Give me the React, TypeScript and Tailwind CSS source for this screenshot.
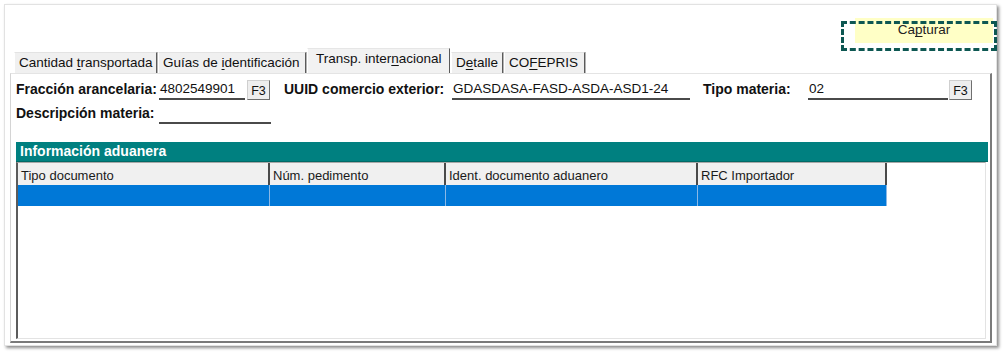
const TABS = [
  { key: "cant", pre: "Cantidad ", mn: "t", post: "ransportada", w: "w-[143px]" },
  { key: "guias", pre: "Guías de ", mn: "i", post: "dentificación", w: "w-[148px]" },
  { key: "transp", pre: "Transp. inter", mn: "n", post: "acional", w: "w-[143px]", active: true },
  { key: "det", pre: "D", mn: "e", post: "talle", w: "w-[52px]" },
  { key: "cof", pre: "CO", mn: "F", post: "EPRIS", w: "w-[81px]" }
];

const COLUMNS = [
  { label: "Tipo documento", w: "w-[252px]" },
  { label: "Núm. pedimento", w: "w-[176px]" },
  { label: "Ident. documento aduanero", w: "w-[252px]" },
  { label: "RFC Importador", w: "w-[189px]" }
];

function F3Button({ className = "" }: { className?: string }) {
  return (
    <button
      type="button"
      className={`flex h-[20px] w-[23px] items-center justify-center border border-[#cfcfcf] border-b-[#6f6f6f] border-r-[#6f6f6f] bg-[#eeeeee] pt-[2px] text-[12.5px] leading-none text-[#111] ${className}`}
    >
      F3
    </button>
  );
}

function Field({ value, w }: { value: string; w: string }) {
  return (
    <div className={`${w} flex h-[19px] items-end border-b-2 border-[#4a4a4a] pb-[1px] pl-[1px] text-[13.5px] leading-[16px] text-[#111]`}>
      {value}
    </div>
  );
}

function Label({ text, w, className = "" }: { text: string; w: string; className?: string }) {
  return (
    <div className={`${w} shrink-0 text-[14px] font-bold leading-[16px] text-[#111] ${className}`}>{text}</div>
  );
}

function TabText({ pre, mn, post }: { pre: string; mn: string; post: string }) {
  return (
    <span className="whitespace-pre">
      {pre}
      <span className="underline underline-offset-2">{mn}</span>
      {post}
    </span>
  );
}

export default function App() {
  return (
    <div className="h-[356px] w-[1008px] bg-white pl-[4px] pt-[4px] font-['Liberation_Sans',Arial,sans-serif]">
      <div className="flex h-[342px] w-[993px] flex-col border border-[#e2e2e2] bg-white shadow-[2px_2px_3px_rgba(0,0,0,0.45)]">
        {/* capture button */}
        <div className="flex h-[43px] justify-end pr-[3px] pt-[13px]">
          <div className="relative flex h-[25px] w-[138px] items-center justify-center bg-[#ffffc6] text-[13.5px] text-[#222]">
            <span>
              Ca<span className="underline underline-offset-2">p</span>turar
            </span>
            <div className="absolute left-[-14px] top-[3px] h-[30px] w-[156px] border-[3px] border-dashed border-[#0d5752]" />
          </div>
        </div>

        {/* tabs */}
        <div className="flex h-[25px] items-end gap-[1px] pl-[9px]">
          {TABS.map((t) =>
            t.active ? (
              <div
                key={t.key}
                className={`${t.w} flex h-[25px] items-center border-l border-t border-l-white border-t-[#e6e6e6] border-r border-r-[#5a5a5a] bg-[#f2f2f2] pb-[3px] pl-[8px] text-[13.5px] text-[#111]`}
              >
                <TabText pre={t.pre} mn={t.mn} post={t.post} />
              </div>
            ) : (
              <div
                key={t.key}
                className={`${t.w} flex h-[21px] items-center border-l border-t border-l-white border-t-[#e3e3e3] border-r border-r-[#5a5a5a] bg-[#f0f0f0] pl-[4px] text-[13.5px] text-[#111] shadow-[1px_0_0_#b4b4b4]`}
              >
                <TabText pre={t.pre} mn={t.mn} post={t.post} />
              </div>
            )
          )}
        </div>

        {/* panel */}
        <div className="ml-[5px] flex h-[270px] w-[982px] flex-col border-l border-t border-l-[#d4d4d4] border-t-[#e4e4e4] border-r-2 border-b-2 border-r-[#7a7a7a] border-b-[#7a7a7a] bg-white pl-[5px] pt-[6px]">
          <div className="flex h-[20px] items-center">
            <Label text="Fracción arancelaria:" w="w-[143px]" className="-mt-[3px]" />
            <Field value="4802549901" w="w-[86px]" />
            <F3Button className="ml-[2px]" />
            <Label text="UUID comercio exterior:" w="w-[168px]" className="-mt-[3px] ml-[14px]" />
            <Field value="GDASDASA-FASD-ASDA-ASD1-24" w="w-[238px]" />
            <Label text="Tipo materia:" w="w-[105px]" className="-mt-[3px] ml-[13px]" />
            <Field value="02" w="w-[140px]" />
            <F3Button className="ml-[1px] w-[22px]" />
          </div>

          <div className="mt-[5px] flex h-[19px] items-center">
            <Label text="Descripción materia:" w="w-[143px]" className="-mt-[3px]" />
            <Field value="" w="w-[112px]" />
          </div>

          <div className="mt-[18px] flex h-[20px] w-[972px] items-center border-b border-[#006a66] bg-[#008080] pl-[4px] text-[14px] font-bold text-white">
            Información aduanera
          </div>

          <div className="flex h-[177px] w-[970px] flex-col border-b border-l-2 border-r border-t border-b-[#e3e3e3] border-l-[#5c5c5c] border-r-[#e3e3e3] border-t-[#a8a8a8] bg-white">
            <div className="flex h-[22px]">
              {COLUMNS.map((c) => (
                <div
                  key={c.label}
                  className={`${c.w} flex items-center border-r-2 border-r-[#4a4a4a] bg-[#f0f0f0] pl-[3px] pt-[3px] text-[13px] text-[#1a1a1a]`}
                >
                  {c.label}
                </div>
              ))}
            </div>
            <div className="flex h-[21px]">
              {COLUMNS.map((c) => (
                <div key={c.label} className={`${c.w} border-r border-r-[#8ab8e6] bg-[#0078d7]`} />
              ))}
            </div>
          </div>
        </div>
      </div>
    </div>
  );
}
